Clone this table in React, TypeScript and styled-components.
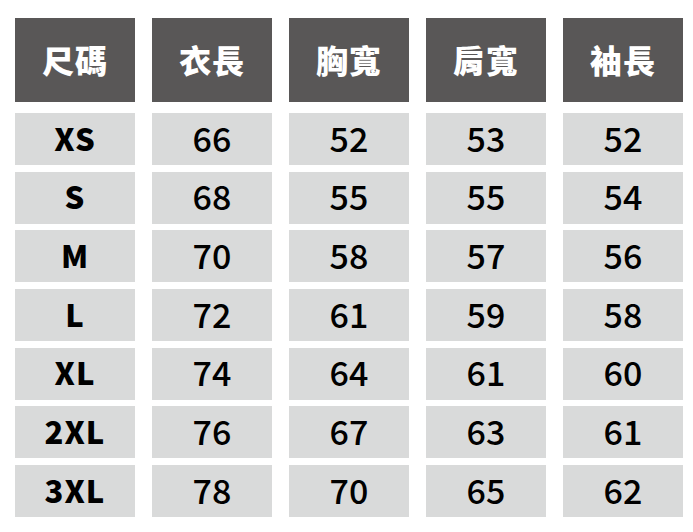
import React from "react";
import styled, { createGlobalStyle } from "styled-components";

const GlobalStyle = createGlobalStyle`
  html, body {
    margin: 0;
    padding: 0;
    background: #ffffff;
  }
  body {
    font-family: "Noto Sans CJK TC", "Noto Sans CJK SC", "Noto Sans", sans-serif;
  }
`;

const Wrapper = styled.div`
  padding: 18px 0 0 15px;
  display: flex;
  flex-direction: column;
  gap: 11px;
`;

const HeadRow = styled.div`
  display: grid;
  grid-template-columns: repeat(5, 120px);
  grid-template-rows: 84px;
  column-gap: 17px;
`;

const Body = styled.div`
  display: grid;
  grid-template-columns: repeat(5, 120px);
  grid-template-rows: repeat(7, 52px);
  column-gap: 17px;
  row-gap: 6.7px;
`;

const HeadCell = styled.div`
  background: #595757;
  color: #ffffff;
  display: flex;
  align-items: center;
  justify-content: center;
  padding-bottom: 3px;
  font-size: 32px;
  font-weight: 900;
  letter-spacing: 1px;
`;

const Cell = styled.div<{ $bold?: boolean }>`
  background: #d9dada;
  color: #000000;
  display: flex;
  align-items: center;
  justify-content: center;
  padding-bottom: 4px;
  font-size: ${(p) => (p.$bold ? "31px" : "34px")};
  font-weight: ${(p) => (p.$bold ? 900 : 500)};
  letter-spacing: ${(p) => (p.$bold ? "1px" : "0")};
`;

const headers = ["尺碼", "衣長", "胸寬", "肩寬", "袖長"];

const rows: (string | number)[][] = [
  ["XS", 66, 52, 53, 52],
  ["S", 68, 55, 55, 54],
  ["M", 70, 58, 57, 56],
  ["L", 72, 61, 59, 58],
  ["XL", 74, 64, 61, 60],
  ["2XL", 76, 67, 63, 61],
  ["3XL", 78, 70, 65, 62],
];

const App: React.FC = () => {
  return (
    <>
      <GlobalStyle />
      <Wrapper>
        <HeadRow>
          {headers.map((h) => (
            <HeadCell key={h}>{h}</HeadCell>
          ))}
        </HeadRow>
        <Body>
          {rows.map((row) =>
            row.map((v, i) => (
              <Cell key={`${row[0]}-${i}`} $bold={i === 0}>
                {v}
              </Cell>
            ))
          )}
        </Body>
      </Wrapper>
    </>
  );
};

export default App;
